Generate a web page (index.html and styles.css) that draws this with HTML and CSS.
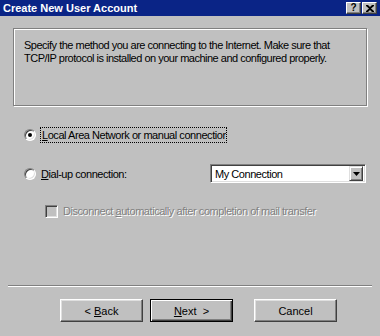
FILE: index.html
```html
<!doctype html>
<html lang="en">
<head>
  <meta charset="utf-8">
  <title>Create New User Account</title>
  <link rel="stylesheet" href="styles.css">
</head>
<body>
<div class="dialog">
  <div class="titlebar">
    <span class="title">Create New User Account</span>
    <div class="caption-buttons">
      <span class="cap-btn help">?</span>
      <span class="cap-btn close">
        <svg width="8" height="7" viewBox="0 0 8 7">
          <path d="M0 0h2l2 2 2-2h2v1L5 3.5 8 6v1H6L4 5 2 7H0V6l3-2.5L0 1z" fill="#000"/>
        </svg>
      </span>
    </div>
  </div>

  <div class="info-box">
    Specify the method you are connecting to the Internet. Make sure that<br>
    TCP/IP protocol is installed on your machine and configured properly.
  </div>

  <div class="options">
    <div class="row">
      <span class="radio checked"></span>
      <span class="label focus"><u>L</u>ocal Area Network or manual connection</span>
    </div>
    <div class="row row-dial">
      <span class="radio"></span>
      <span class="label"><u>D</u>ial-up connection:</span>
      <div class="combo">
        <span class="combo-text">My Connection</span>
        <span class="combo-btn">
          <svg width="7" height="4" viewBox="0 0 7 4"><path d="M0 0h7L3.5 4z" fill="#000"/></svg>
        </span>
      </div>
    </div>
    <div class="row row-check">
      <span class="checkbox"></span>
      <span class="label disabled">Disconnect <u>a</u>utomatically after completion of mail transfer</span>
    </div>
  </div>

  <div class="separator"></div>

  <div class="buttons">
    <span class="btn">&lt;&nbsp; <u>B</u>ack</span>
    <span class="btn default"><u>N</u>ext&nbsp; &gt;</span>
    <span class="btn cancel">Cancel</span>
  </div>
</div>
</body>
</html>
```

FILE: styles.css
```css
* {
    margin: 0;
    padding: 0;
    box-sizing: border-box;
}
body {
    background-color: #c0c0c0;
    font-family: "Liberation Sans", Arial, sans-serif;
    font-size: 11px;
    color: #000;
}
.dialog {
    width: 380px;
    height: 336px;
    background-color: #c0c0c0;
    overflow: hidden;
}
.titlebar {
    height: 16px;
    background-color: #0a2486;
    display: flex;
    align-items: center;
    justify-content: space-between;
    padding: 0 3px 0 3px;
}
.title {
    color: #fff;
    font-weight: bold;
    font-size: 11px;
}
.caption-buttons {
    display: flex;
    gap: 1px;
}
.cap-btn {
    width: 15px;
    height: 12px;
    background-color: #c0c0c0;
    border: 1px solid;
    border-color: #fff #404040 #404040 #fff;
    box-shadow: inset -1px -1px 0 #808080;
    display: flex;
    align-items: center;
    justify-content: center;
    font-weight: bold;
    font-size: 10px;
    line-height: 1;
}
.info-box {
    margin: 12px 0 0 13px;
    width: 354px;
    height: 78px;
    border: 1px solid #808080;
    box-shadow: inset 1px 1px 0 #fff, 1px 1px 0 #fff;
    padding: 10px 0 0 10px;
    letter-spacing: -0.5px;
    line-height: 13px;
}
.options {
    margin: 21px 0 0 24px;
    display: flex;
    flex-direction: column;
    gap: 21px;
}
.row {
    display: flex;
    align-items: center;
    height: 16px;
}
.row-dial {
    height: 19px;
}
.row-check {
    height: 14px;
    padding-left: 21px;
}
.radio {
    width: 12px;
    height: 12px;
    border-radius: 50%;
    background-color: #fff;
    border: 1px solid;
    border-color: #808080 #fff #fff #808080;
    box-shadow: inset 1px 1px 0 #404040, inset -1px -1px 0 #dfdfdf;
    display: flex;
    align-items: center;
    justify-content: center;
    flex-shrink: 0;
}
.radio.checked::after {
    content: "";
    width: 4px;
    height: 4px;
    border-radius: 50%;
    background-color: #000;
}
.label {
    margin-left: 4px;
    padding: 1px 1px;
    white-space: nowrap;
    letter-spacing: -0.45px;
}
.label.focus {
    border: 1px dotted #000;
    width: 187px;
    overflow: hidden;
}
.combo {
    margin-left: auto;
    margin-right: 14px;
    width: 156px;
    height: 19px;
    background-color: #fff;
    border: 1px solid;
    border-color: #808080 #fff #fff #808080;
    box-shadow: inset 1px 1px 0 #404040, inset -1px -1px 0 #dfdfdf;
    display: flex;
    align-items: center;
    padding: 2px;
}
.combo-text {
    flex: 1;
    padding-left: 2px;
    letter-spacing: -0.45px;
}
.combo-btn {
    width: 14px;
    height: 15px;
    background-color: #c0c0c0;
    border: 1px solid;
    border-color: #dfdfdf #404040 #404040 #dfdfdf;
    box-shadow: inset 1px 1px 0 #fff, inset -1px -1px 0 #808080;
    display: flex;
    align-items: center;
    justify-content: center;
}
.checkbox {
    width: 13px;
    height: 13px;
    background-color: #c0c0c0;
    border: 1px solid;
    border-color: #808080 #fff #fff #808080;
    box-shadow: inset 1px 1px 0 #404040, inset -1px -1px 0 #dfdfdf;
    flex-shrink: 0;
}
.row-check .label {
    margin-left: 4px;
}
.label.disabled {
    color: #808080;
    text-shadow: 1px 1px 0 #fff;
}
.separator {
    margin: 67px 0 0 8px;
    width: 364px;
    height: 2px;
    border-top: 1px solid #808080;
    border-bottom: 1px solid #fff;
}
.buttons {
    margin: 12px 0 0 60px;
    display: flex;
}
.btn {
    width: 83px;
    height: 23px;
    background-color: #c0c0c0;
    border: 1px solid;
    border-color: #fff #404040 #404040 #fff;
    box-shadow: inset -1px -1px 0 #808080, inset 1px 1px 0 #dfdfdf;
    display: flex;
    align-items: center;
    justify-content: center;
    margin-right: 7px;
}
.btn.default {
    border: 1px solid #000;
    box-shadow: inset 1px 1px 0 #fff, inset -1px -1px 0 #404040, inset -2px -2px 0 #808080;
}
.btn.cancel {
    margin-left: 14px;
}
```
